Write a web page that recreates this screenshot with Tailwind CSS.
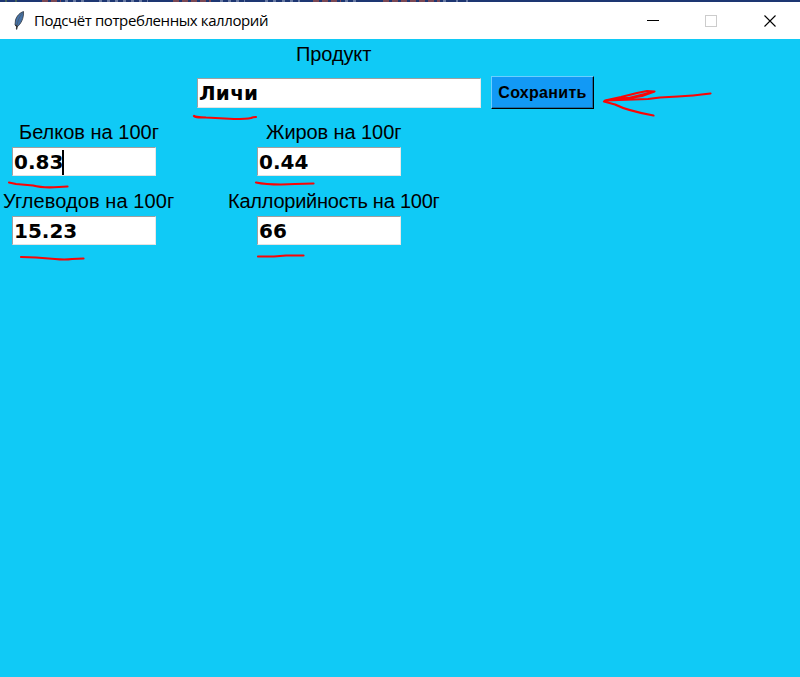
<!DOCTYPE html>
<html lang="ru">
<head>
<meta charset="utf-8">
<title>Подсчёт потребленных каллорий</title>
<script src="https://cdn.jsdelivr.net/npm/@tailwindcss/browser@4"></script>
</head>
<body class="overflow-hidden">
<div class="relative flex h-[677px] w-[800px] flex-col overflow-hidden bg-[#10caf6] font-['Liberation_Sans',sans-serif] text-black">
  <div class="h-[2px] shrink-0 bg-[#1d3672]">
    <svg class="block" width="800" height="2" fill="none" stroke-width="1.5">
      <path d="M5 1h2M15 1h2" stroke="#55734f"/>
      <path d="M42 1H61M173 1h38M313 1h28M383 1h57" stroke="#9c4d49" stroke-dasharray="6 3"/>
      <path d="M65 1H88M99 1h49M220 1h25M265 1h15M282 1h18M345 1h14M443 1h8M456 1h2M466 1h2" stroke="#8291b4" stroke-dasharray="3 5"/>
    </svg>
  </div>
  <header class="flex h-[37px] shrink-0 items-center bg-white">
    <svg class="ml-[13px] shrink-0" width="12" height="20" viewBox="0 0 12 20">
      <path d="M10.5 0.5C7 1.5 3.5 5 2.5 9L2 14L4 16C8 13 11 7 10.5 .5Z" fill="#4573a8" stroke="#30353c" stroke-width=".8"/>
      <path d="M9.5 2C6 6 4 11 3.5 19" fill="none" stroke="#4b5563" stroke-width=".7"/>
      <path d="M2.500 14L4 15.500L3.500 18" fill="none" stroke="#333" stroke-width="1.4"/>
    </svg>
    <h1 class="ml-[9px] w-[240px] whitespace-nowrap pb-[2px] font-['Open_Sans','Noto_Sans',sans-serif] text-[15px] leading-[20px] tracking-[-0.41px]">Подсчёт потребленных каллорий</h1>
    <div class="ml-auto flex items-center pr-[23px]">
      <svg class="block" width="131" height="14" fill="none" shape-rendering="crispEdges">
        <path d="M1 6.5H13" stroke="#000"/>
        <rect x="59.500" y="1.500" width="11" height="11" stroke="#ccc"/>
        <path d="M118.500 1.500L129.500 12.500M129.500 1.500L118.500 12.500" stroke="#000" stroke-width="1.100" shape-rendering="auto"/>
      </svg>
    </div>
  </header>
  <main class="flex flex-col pt-[3px] text-[20px] leading-[24px]">
    <div class="h-[24px] pl-[296px] tracking-[-0.1px]">Продукт</div>
    <div class="mt-[10px] flex h-[33px] items-center gap-[10px] pl-[197px]">
      <div class="flex h-[30px] w-[284px] items-center border border-t-[#a0a0a0] border-r-[#e8e8e8] border-b-[#e3e3e3] border-l-[#a0a0a0] bg-white pt-px pl-[1px] font-['DejaVu_Sans',sans-serif] font-bold tracking-[0.25px]">Личи</div>
      <div class="flex h-[33px] w-[103px] items-center justify-center border-t border-r border-b border-l border-t-[#6bd0ff] border-l-[#6bd0ff] border-r-black border-b-black bg-[#1299f5] text-[16px] font-bold tracking-[0.3px] shadow-[inset_-1px_-1px_#176fa9]">Сохранить</div>
    </div>
    <div class="mt-[11px] grid h-[24px] grid-cols-[245px_1fr] whitespace-nowrap">
      <div class="pl-[19px]">Белков на 100г</div>
      <div class="pl-[21px] tracking-[-0.08px]">Жиров на 100г</div>
    </div>
    <div class="mt-[3px] flex gap-[101px] pl-[12px] font-['DejaVu_Sans',sans-serif] font-bold">
      <div class="flex h-[29px] w-[144px] items-center border border-t-[#a0a0a0] border-r-[#e8e8e8] border-b-[#e3e3e3] border-l-[#a0a0a0] bg-white pt-px pl-[1px]">0.83<span class="ml-[-1px] h-[25px] w-[2px] bg-black"></span></div>
      <div class="flex h-[29px] w-[144px] items-center border border-t-[#a0a0a0] border-r-[#e8e8e8] border-b-[#e3e3e3] border-l-[#a0a0a0] bg-white pt-px pl-[1px]">0.44</div>
    </div>
    <div class="mt-[13px] grid h-[24px] grid-cols-[225px_1fr] whitespace-nowrap">
      <div class="pl-[3px] tracking-[0.08px]">Углеводов на 100г</div>
      <div class="pl-[3px] tracking-[-0.24px]">Каллорийность на 100г</div>
    </div>
    <div class="mt-[3px] flex gap-[101px] pl-[12px] font-['DejaVu_Sans',sans-serif] font-bold">
      <div class="flex h-[29px] w-[144px] items-center border border-t-[#a0a0a0] border-r-[#e8e8e8] border-b-[#e3e3e3] border-l-[#a0a0a0] bg-white pt-px pl-[1px]">15.23</div>
      <div class="flex h-[29px] w-[144px] items-center border border-t-[#a0a0a0] border-r-[#e8e8e8] border-b-[#e3e3e3] border-l-[#a0a0a0] bg-white pt-px pl-[1px]">66</div>
    </div>
  </main>
  <svg class="pointer-events-none absolute inset-0" width="800" height="677" fill="none" stroke="#fa0505" stroke-width="2.200" stroke-linecap="round" stroke-linejoin="round">
    <path d="M194 116C197 118 201 117 206 117.500L234 119C242 119 247 119 251 118Q253 117 256 117"/>
    <path d="M9 182.500L16 184L33 185.500C42 188 52 187.500 59 187L67.500 186.500"/>
    <path d="M256 182.500C263 184 273 184.500 281 184.500L295 184L313.500 183.500"/>
    <path d="M21 257L36 257.500L55 259Q65 260 72 259L83.500 258.500"/>
    <path d="M258 256.500L274 256.500L286 255.500L303.500 255.500"/>
    <path d="M710.500 93.500C699 95 690 96 678 96.500L660 97.500L648 99L605 100.500L621 97L637 93L647 91L654.500 91.500L642 96L627 98.500L649 93L636 97L607 100L604 101.500L615 104.500C626 110 637 112.500 653.500 115.500"/>
  </svg>
</div>
</body>
</html>
